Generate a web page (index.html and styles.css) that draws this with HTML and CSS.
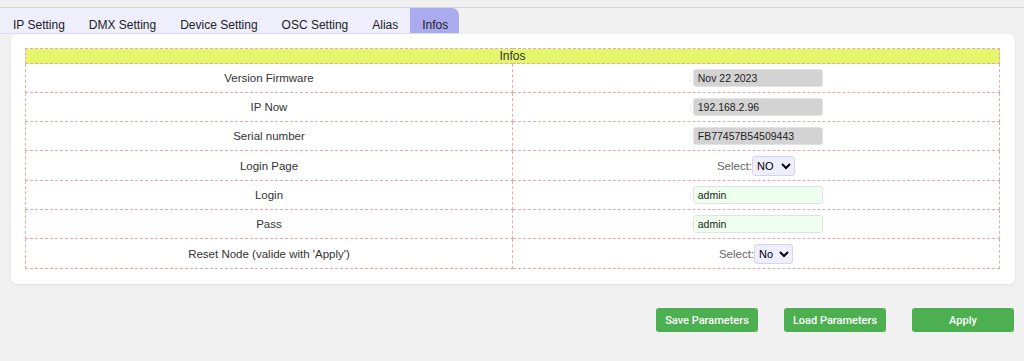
FILE: index.html
```html
<!DOCTYPE html>
<html lang="en">
<head>
    <meta charset="UTF-8">
    <meta name="viewport" content="width=device-width, initial-scale=1.0">
    <title>Infos</title>
    <link rel="stylesheet" href="styles.css">
</head>
<body>
    <div class="tabbar">
        <div class="tabs">
            <button class="tab">IP Setting</button>
            <button class="tab">DMX Setting</button>
            <button class="tab">Device Setting</button>
            <button class="tab">OSC Setting</button>
            <button class="tab">Alias</button>
            <button class="tab active">Infos</button>
        </div>
    </div>

    <div class="card">
        <table class="grid">
            <tr><th colspan="2">Infos</th></tr>
            <tr>
                <td>Version Firmware</td>
                <td><span class="colon">:</span><input type="text" class="ro" value="Nov 22 2023" readonly></td>
            </tr>
            <tr>
                <td>IP Now</td>
                <td><span class="colon">:</span><input type="text" class="ro" value="192.168.2.96" readonly></td>
            </tr>
            <tr>
                <td>Serial number</td>
                <td><span class="colon">:</span><input type="text" class="ro" value="FB77457B54509443" readonly></td>
            </tr>
            <tr class="sel-row">
                <td>Login Page</td>
                <td><span class="sel-label">Select:</span><select class="sel"><option>NO</option><option>YES</option></select></td>
            </tr>
            <tr>
                <td>Login</td>
                <td><span class="colon">:</span><input type="text" class="rw" value="admin"></td>
            </tr>
            <tr>
                <td>Pass</td>
                <td><span class="colon">:</span><input type="text" class="rw" value="admin"></td>
            </tr>
            <tr class="sel-row">
                <td>Reset Node (valide with 'Apply')</td>
                <td><span class="sel-label">Select:</span><select class="sel small"><option>No</option><option>Yes</option></select></td>
            </tr>
        </table>
    </div>

    <div class="actions">
        <button class="btn">Save Parameters</button>
        <button class="btn">Load Parameters</button>
        <button class="btn">Apply</button>
    </div>
</body>
</html>
```

FILE: styles.css
```css
body {
    font-family: "Liberation Sans", Arial, sans-serif;
    margin: 0;
    padding-top: 7px;
    background-color: #f1f1f1;
    color: #333;
}
.tabbar {
    border-top: 1px solid #d6d6d6;
}
.tabs {
    display: inline-flex;
    background-color: #eeeefd;
    height: 25px;
    padding-left: 1px;
    border-bottom: 1px solid #dcdcec;
}
.tab {
    font-family: inherit;
    font-size: 12px;
    color: #222;
    background: none;
    border: none;
    padding: 9px 12px 0 12px;
    height: 25px;
    cursor: pointer;
}
.tab.active {
    background-color: #aaaaee;
    border-top-right-radius: 7px;
    padding-right: 11px;
}
.card {
    background-color: #fff;
    margin: 0 9px 0 11px;
    padding: 14px 15px 15px 14px;
    border-radius: 6px;
    box-shadow: 0 1px 3px rgba(0, 0, 0, 0.08);
}
.grid {
    width: 100%;
    border-collapse: collapse;
    font-size: 11.5px;
}
.grid th {
    background-color: #e4f66b;
    font-weight: normal;
    font-size: 12px;
    height: 14px;
    padding: 0;
    line-height: 14px;
    border: 1px dashed #e2aaaa;
    color: #333;
}
.grid td {
    border: 1px dashed #e2aaaa;
    text-align: center;
    height: 28px;
    padding: 0;
    width: 50%;
}
.grid .sel-row td {
    height: 29px;
}
.colon {
    color: #ccc;
    font-size: 9px;
    margin-right: 1px;
}
input[type="text"] {
    font-family: inherit;
    font-size: 10.5px;
    color: #222;
    width: 130px;
    height: 18px;
    box-sizing: border-box;
    padding: 0 4px;
    border: 1px solid #e2e2e2;
    border-radius: 3px;
    vertical-align: middle;
}
.ro {
    background-color: #d3d3d3;
}
.rw {
    background-color: #efffef;
    color: #3a4a2a;
}
.sel-label {
    color: #666;
    font-size: 11.5px;
    vertical-align: middle;
}
.sel {
    font-family: inherit;
    font-size: 11px;
    background-color: #eeeeff;
    border: 1px solid #d6d6e6;
    border-radius: 3px;
    height: 20px;
    width: 43px;
    vertical-align: middle;
}
.sel.small {
    width: 39px;
}
.actions {
    display: flex;
    justify-content: flex-end;
    gap: 26px;
    margin: 24px 10px 0 0;
}
.btn {
    font-family: Roboto, "Liberation Sans", sans-serif;
    background-color: #4caf50;
    color: white;
    font-size: 11px;
    font-weight: 500;
    width: 102px;
    height: 24px;
    border: none;
    border-radius: 3px;
    cursor: pointer;
}
.btn:hover {
    background-color: #45a049;
}
```
